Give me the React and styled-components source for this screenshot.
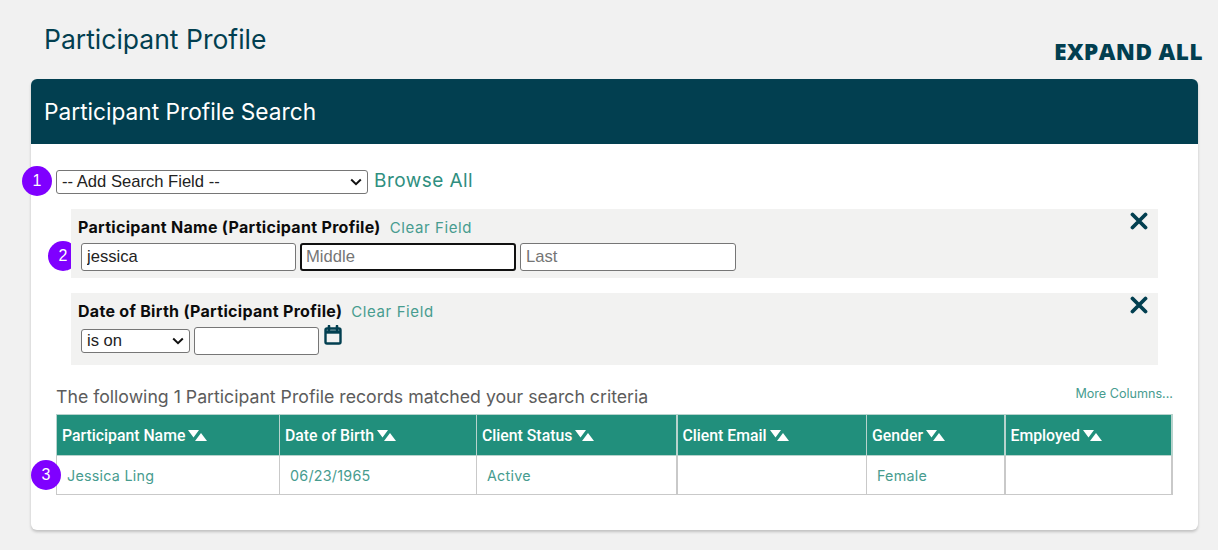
import React from "react";
import styled, { createGlobalStyle } from "styled-components";

const chevron = `url("data:image/svg+xml,%3Csvg xmlns='http://www.w3.org/2000/svg' width='12' height='8' viewBox='0 0 12 8'%3E%3Cpath d='M1.2 1.5L6 6.2L10.8 1.5' stroke='%23111' stroke-width='2' fill='none'/%3E%3C/svg%3E")`;

const Global = createGlobalStyle`
  html, body { margin: 0; padding: 0; background: #f1f1f1; }
  body { font-family: "Inter", "Liberation Sans", sans-serif; width: 1218px; height: 550px; overflow: hidden; }
`;
const Page = styled.div`
  padding: 0 20px 0 31px;
  height: 550px;
  box-sizing: border-box;
`;
const TopBar = styled.div`
  height: 79px;
  display: flex;
  justify-content: space-between;
`;
const Title = styled.h1`
  margin: 22px 0 0 13px;
  font-weight: 400;
  font-size: 26.5px;
  line-height: 34px;
  color: #023f50;
`;
const Expand = styled.a`
  margin: 35px -5px 0 0;
  font-family: "Open Sans", sans-serif;
  font-weight: 800;
  font-size: 23px;
  line-height: 32px;
  letter-spacing: 0.3px;
  color: #023f50;
`;
const Card = styled.section`
  width: 1167px;
  height: 451px;
  background: #fff;
  border-radius: 6px;
  box-shadow: 0 2px 3px rgba(0,0,0,0.2);
`;
const CardHead = styled.header`
  height: 65px;
  background: #023f50;
  border-radius: 6px 6px 0 0;
  padding: 0 0 0 13px;
  box-sizing: border-box;
  display: flex;
  align-items: center;
  color: #fff;
  font-size: 22.7px;
`;
const CardBody = styled.div`
  position: relative;
  padding: 26px 25px 0;
`;
const Badge = styled.span`
  position: absolute;
  left: ${p => p.$x}px;
  top: ${p => p.$y}px;
  width: 30px;
  height: 30px;
  border-radius: 50%;
  background: #7f00ff;
  color: #fff;
  font-family: "Liberation Sans", sans-serif;
  font-size: 16px;
  display: flex;
  align-items: center;
  justify-content: center;
`;
const AddRow = styled.div`
  display: flex;
  align-items: center;
  gap: 6px;
  height: 24px;
  margin-bottom: 15px;
`;
const NativeSelect = styled.select`
  appearance: none;
  width: ${p => p.$w}px;
  height: 24px;
  box-sizing: border-box;
  font-family: "Liberation Sans", sans-serif;
  font-size: 16.6px;
  line-height: 20px;
  color: #222;
  background: #fff ${chevron} no-repeat right 5px center;
  border: 1px solid #767676;
  border-radius: 3px;
  padding: 0 0 1px 5px;
`;
const BrowseLink = styled.a`
  font-size: 19px;
  letter-spacing: 0.45px;
  color: #2f8f80;
  position: relative;
  top: -2px;
`;
const Panel = styled.div`
  position: relative;
  width: 1087px;
  height: ${p => p.$h}px;
  margin: 0 0 15px 15px;
  padding: 9px 8px 0 10px;
  box-sizing: border-box;
  background: #f2f2f1;
`;
const LabelRow = styled.div`
  display: flex;
  gap: 9px;
  align-items: baseline;
  height: 20px;
  line-height: 18px;
  margin-left: -3px;
  margin-bottom: 5px;
`;
const FieldLabel = styled.strong`
  font-weight: 700;
  font-size: 16px;
  letter-spacing: 0.3px;
  color: #0c0c0c;
`;
const ClearLink = styled.a`
  font-size: 15px;
  letter-spacing: 0.6px;
  color: #479c8f;
`;
const InputRow = styled.div`
  display: flex;
  align-items: flex-start;
  gap: 4px;
`;
const TextInput = styled.input`
  width: ${p => p.$w}px;
  height: 28px;
  box-sizing: border-box;
  font-family: "Liberation Sans", sans-serif;
  font-size: 16.6px;
  color: #222;
  background: #fff;
  border: ${p => (p.$focus ? "2px solid #111" : "1px solid #767676")};
  border-radius: 3px;
  padding: 0 ${p => (p.$focus ? 4 : 5)}px 1px;
  &::placeholder { color: #757575; opacity: 1; }
`;
const StepSelect = styled(NativeSelect)`
  margin-top: 2px;
`;
const CloseButton = styled.svg`
  position: absolute;
  right: 9px;
  top: 3px;
  width: 20px;
  height: 18px;
`;
const CalendarIcon = styled.svg`
  width: 18px;
  height: 20px;
  margin: -2px 0 0 1px;
`;
const ResultRow = styled.div`
  display: flex;
  justify-content: space-between;
  align-items: flex-start;
  height: 29px;
  margin-top: 20px;
  width: 1117px;
`;
const ResultText = styled.p`
  margin: 0;
  font-size: 17.7px;
  line-height: 24px;
  color: #5c5c5c;
`;
const MoreLink = styled.a`
  font-size: 12.6px;
  line-height: 18px;
  color: #479c8f;
`;
const Table = styled.table`
  width: 1115px;
  table-layout: fixed;
  border-collapse: collapse;
`;
const Th = styled.th`
  width: ${p => p.$w}px;
  height: 41px;
  box-sizing: border-box;
  background: #218f7c;
  color: #fff;
  font-family: "Roboto", sans-serif;
  font-size: 15.8px;
  font-weight: 500;
  text-align: left;
  padding: 1px 5px 0;
  border: 1px solid #b7d3cd;
  border-right-width: ${p => p.$thick ? 2 : 1}px;
  white-space: nowrap;
`;
const Td = styled.td`
  height: 39px;
  box-sizing: border-box;
  font-size: 14.3px;
  letter-spacing: 0.25px;
  color: #479c8f;
  padding: 0 10px;
  border: 1px solid #c9c9c9;
  border-right-width: ${p => p.$thick ? 2 : 1}px;
`;
const SortIcon = styled.svg`
  width: 19px;
  height: 11px;
  margin-left: 3px;
  vertical-align: 0;
`;

const Sort = () => (
  <SortIcon viewBox="0 0 19 11">
    <path d="M0 0H11L5.5 7.5z M7 11H19L13 3z" fill="#fff" />
  </SortIcon>
);
const Close = () => (
  <CloseButton viewBox="0 0 20 18">
    <path d="M3.5 2.5L16.5 15.5M16.5 2.5L3.5 15.5" stroke="#023f50" strokeWidth="3.8" strokeLinecap="round" fill="none" />
  </CloseButton>
);

const columns = [
  { name: "Participant Name", w: 223, value: "Jessica Ling" },
  { name: "Date of Birth", w: 197, value: "06/23/1965" },
  { name: "Client Status", w: 200, value: "Active", thick: true },
  { name: "Client Email", w: 190, value: "" },
  { name: "Gender", w: 138, value: "Female", thick: true },
  { name: "Employed", w: 167, value: "", thick: true },
];

export default function App() {
  return (
    <Page>
      <Global />
      <TopBar>
        <Title>Participant Profile</Title>
        <Expand>EXPAND ALL</Expand>
      </TopBar>
      <Card>
        <CardHead>Participant Profile Search</CardHead>
        <CardBody>
          <Badge $x={-9} $y={22}>1</Badge>
          <Badge $x={17} $y={97}>2</Badge>
          <Badge $x={0} $y={316}>3</Badge>
          <AddRow>
            <NativeSelect $w={312} defaultValue="add">
              <option value="add">-- Add Search Field --</option>
            </NativeSelect>
            <BrowseLink>Browse All</BrowseLink>
          </AddRow>
          <Panel $h={69}>
            <LabelRow>
              <FieldLabel>Participant Name (Participant Profile)</FieldLabel>
              <ClearLink>Clear Field</ClearLink>
            </LabelRow>
            <InputRow>
              <TextInput $w={215} defaultValue="jessica" />
              <TextInput $w={216} $focus placeholder="Middle" />
              <TextInput $w={216} placeholder="Last" />
            </InputRow>
            <Close />
          </Panel>
          <Panel $h={72}>
            <LabelRow>
              <FieldLabel>Date of Birth (Participant Profile)</FieldLabel>
              <ClearLink>Clear Field</ClearLink>
            </LabelRow>
            <InputRow>
              <StepSelect $w={109} defaultValue="on">
                <option value="on">is on</option>
              </StepSelect>
              <TextInput $w={125} />
              <CalendarIcon viewBox="0 0 18 20">
                <path d="M5 1v4M13 1v4" stroke="#023f50" strokeWidth="2.6" strokeLinecap="round" fill="none" />
                <rect x="1.5" y="3.5" width="15" height="15" rx="1.5" stroke="#023f50" strokeWidth="2.4" fill="none" />
                <path d="M1.5 7h15" stroke="#023f50" strokeWidth="3.4" fill="none" />
              </CalendarIcon>
            </InputRow>
            <Close />
          </Panel>
          <ResultRow>
            <ResultText>The following 1 Participant Profile records matched your search criteria</ResultText>
            <MoreLink>More Columns...</MoreLink>
          </ResultRow>
          <Table>
            <thead>
              <tr>
                {columns.map(c => (
                  <Th key={c.name} $w={c.w} $thick={c.thick}>{c.name}<Sort /></Th>
                ))}
              </tr>
            </thead>
            <tbody>
              <tr>
                {columns.map(c => (
                  <Td key={c.name} $thick={c.thick}>{c.value}</Td>
                ))}
              </tr>
            </tbody>
          </Table>
        </CardBody>
      </Card>
    </Page>
  );
}
